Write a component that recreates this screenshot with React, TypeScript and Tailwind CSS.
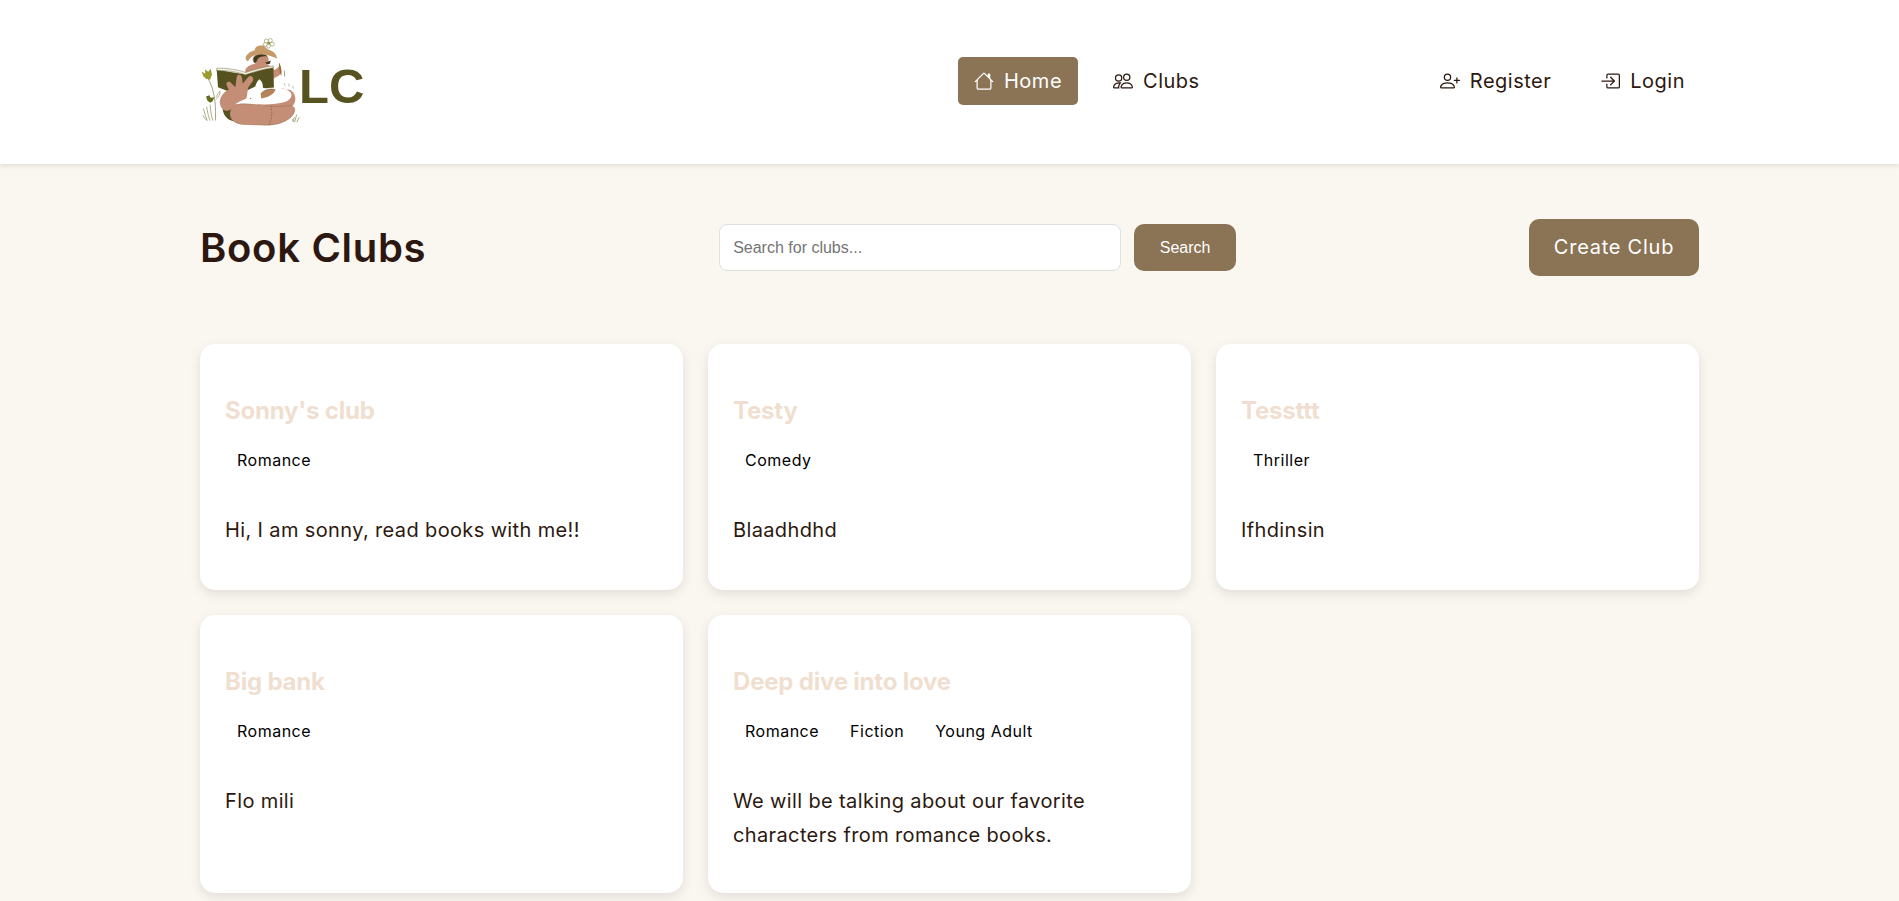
import React from 'react';
import { BsHouse, BsPeople, BsPersonPlus, BsBoxArrowInRight } from 'react-icons/bs';

interface Club {
  name: string;
  genres: string[];
  description: string;
}

const clubs: Club[] = [
  { name: "Sonny's club", genres: ['Romance'], description: 'Hi, I am sonny, read books with me!!' },
  { name: 'Testy', genres: ['Comedy'], description: 'Blaadhdhd' },
  { name: 'Tessttt', genres: ['Thriller'], description: 'Ifhdinsin' },
  { name: 'Big bank', genres: ['Romance'], description: 'Flo mili' },
  {
    name: 'Deep dive into love',
    genres: ['Romance', 'Fiction', 'Young Adult'],
    description: 'We will be talking about our favorite characters from romance books.',
  },
];

// Reader with a rabbit, drawn in the coordinates of a 3x crop of the logo
const LogoArt = () => (
  <svg viewBox="60 45 300 275" className="w-[100px] h-[92px] shrink-0 overflow-visible">
    {/* plant */}
    <path d="M106 298 C108 262 106 222 92 188 C88 178 84 172 82 168" fill="none" stroke="#77783a" strokeWidth="2" />
    <path d="M65 152 L76 158 L75 145 L85 152 L92 143 L96 160 L90 176 L78 173 L70 165 Z" fill="#9a9a2e" />
    <path d="M78 226 L88 222 L92 230 L103 228 L98 240 L90 245 L82 238 Z" fill="#666b22" />
    <path d="M108 228 C112 220 116 214 120 210 C120 220 116 228 108 234" fill="none" stroke="#77783a" strokeWidth="1.6" />
    <path d="M70 262 C74 276 78 290 82 298 M80 256 C82 272 86 288 90 298 M90 250 C92 270 94 285 98 298 M68 282 C72 288 76 294 80 298" fill="none" stroke="#77783a" strokeWidth="1.8" />
    <path d="M338 302 L344 288 M344 303 L350 280 M350 303 L358 288 M336 294 L342 302" fill="none" stroke="#77783a" strokeWidth="1.8" />
    {/* shadow behind the leg */}
    <path d="M128 262 C130 284 142 296 160 300 L170 262 Z" fill="#565220" />
    {/* torso and head */}
    <path d="M196 146 C204 130 226 126 240 128 C256 126 274 132 282 146 L284 172 L196 172 Z" fill="#c48e76" />
    <ellipse cx="242" cy="114" rx="24" ry="18" fill="#c48e76" />
    <path d="M220 112 C226 98 254 94 262 106 C252 104 240 106 234 112 L228 124 L222 124 Z" fill="#3f3a1a" />
    <path d="M256 124 L272 118 L270 128 L260 130 Z" fill="#3f3a1a" />
    {/* hat */}
    <path d="M197 108 C202 96 214 90 224 88 C224 76 238 70 252 74 C258 82 264 86 272 88 C282 92 290 100 291 112 C276 106 262 100 244 99 C226 98 210 106 204 120 C199 118 196 114 197 108 Z" fill="#c49b68" />
    {/* flower */}
    <g fill="#fff" stroke="#77783a" strokeWidth="1.5">
      <circle cx="259" cy="60" r="6" />
      <circle cx="271" cy="58" r="6" />
      <circle cx="277" cy="69" r="6" />
      <circle cx="265" cy="75" r="6" />
      <circle cx="256" cy="70" r="6" />
    </g>
    <circle cx="266" cy="66" r="4" fill="#9a9a2e" />
    {/* hand with the pen on the right */}
    <path d="M278 148 C286 146 292 142 296 136 L304 150 C302 162 292 168 278 170 Z" fill="#c48e76" />
    <path d="M297 124 C302 130 306 148 304 164 C300 160 296 142 297 124 Z" fill="#9a6a3c" />
    <path d="M313 148 L314 166" stroke="#5b4a28" strokeWidth="1.6" fill="none" />
    {/* book */}
    <path d="M110 146 L196 160 L280 138 L282 206 L226 196 L196 210 L148 212 L114 198 Z" fill="#565220" />
    <path d="M110 141 C140 140 176 146 197 154 C220 146 256 136 280 134 L280 140 C256 143 222 151 197 161 C176 153 140 147 110 148 Z" fill="#f5f1e3" stroke="#565220" strokeWidth="1.2" />
    {/* right arm round the rabbit */}
    <path d="M290 204 C316 194 344 204 346 232 C346 250 336 262 310 262 L230 250 Z" fill="#c48e76" />
    {/* leg */}
    <path d="M154 254 C190 240 240 254 280 256 C316 258 338 246 344 262 C348 286 310 313 256 312 L190 310 C166 308 148 296 150 275 Z" fill="#c48e76" stroke="#7a5a3c" strokeWidth="1" />
    <path d="M272 254 C278 272 276 296 266 312" fill="none" stroke="#5b4a28" strokeWidth="1.6" strokeDasharray="5 4" />
    {/* arm and fingers */}
    <path d="M120 248 C118 232 126 216 146 206 L140 192 C136 182 148 178 154 186 L166 198 L170 168 C172 158 184 158 186 170 L188 188 L206 166 C214 160 224 170 218 180 L204 200 L200 232 C180 240 162 248 154 262 C142 276 124 268 120 248 Z" fill="#c48e76" />
    {/* rabbit */}
    <path d="M195 237 C200 225 214 219 228 216 C222 204 226 184 238 174 C248 180 250 194 248 206 C270 196 310 196 330 212 C340 222 332 236 316 242 C290 250 250 252 222 248 C206 246 196 243 195 237 Z" fill="#fff" />
    <path d="M242 218 C252 206 272 200 286 206 C284 218 264 230 244 232 Z" fill="#b4835a" />
    <path d="M242 218 C252 206 272 200 286 206" fill="none" stroke="#5b4a28" strokeWidth="1.4" />
    <circle cx="212" cy="232" r="1.5" fill="#3f3a1a" />
    {/* tuft */}
    <path d="M300 188 C310 182 332 184 344 198 C340 208 322 208 310 202 C304 198 300 194 300 188 Z" fill="#fff" />
    <path d="M312 186 L316 194 M326 188 L328 196 M338 194 L340 202" stroke="#77783a" strokeWidth="1.4" fill="none" />
  </svg>
);

const NavLink = ({ icon, label, active = false }: { icon: React.ReactNode; label: string; active?: boolean }) => (
  <a
    className={`flex items-center gap-[10px] h-12 px-4 rounded-[5px] text-[20px] tracking-[0.5px] ${
      active ? 'bg-[#8b7355] text-white' : 'text-[#2c1810]'
    }`}
  >
    {icon}
    <span>{label}</span>
  </a>
);

const ClubCard = ({ club }: { club: Club }) => (
  <div className="bg-white rounded-[15px] px-[25px] pt-[49px] pb-[41px] shadow-[0_4px_12px_rgba(0,0,0,0.1)]">
    <h3 className="text-[24px] leading-[36px] font-bold tracking-[-0.2px] text-[#f0dfd0]">{club.name}</h3>
    <div className="flex gap-[7px] mt-[15px]">
      {club.genres.map((genre) => (
        <span key={genre} className="px-3 py-1 text-[16px] leading-[24px] tracking-[0.5px] text-black">
          {genre}
        </span>
      ))}
    </div>
    <p className="mt-[37px] min-h-[36px] text-[20px] leading-[34px] tracking-[0.37px] text-[#2c1810]">{club.description}</p>
  </div>
);

export default function App() {
  return (
    <div className="min-h-screen bg-[#faf6f0] font-['Inter',sans-serif]">
      <header className="h-[164px] bg-white shadow-[0_2px_5px_rgba(0,0,0,0.1)] flex items-center px-[200px]">
        <div className="flex items-center w-[742px] shrink-0">
          <LogoArt />
          <span className="-ml-[1px] mt-[8px] font-['Liberation_Sans',sans-serif] font-bold text-[49px] leading-none text-[#575320]">
            LC
          </span>
        </div>
        <nav className="flex items-center -mt-[2px] gap-[19px] pl-[16px]">
          <NavLink active icon={<BsHouse size={20} />} label="Home" />
          <NavLink icon={<BsPeople size={20} />} label="Clubs" />
        </nav>
        <div className="flex items-center -mt-[2px] -mr-[2px] gap-[17px] ml-auto">
          <NavLink icon={<BsPersonPlus size={20} />} label="Register" />
          <NavLink icon={<BsBoxArrowInRight size={20} />} label="Login" />
        </div>
      </header>

      <main className="px-[200px] pt-[54px] pb-2">
        <div className="flex items-center justify-between mb-[66px]">
          <h1 className="text-[40px] leading-[60px] font-semibold tracking-[0.7px] text-[#2c1810]">Book Clubs</h1>
          <form className="flex gap-[13px] -mt-[2px] font-['Liberation_Sans',sans-serif]">
            <input
              placeholder="Search for clubs..."
              className="w-[402px] h-[47px] px-[13px] pt-px bg-white border border-[#e0e0e0] rounded-[8px] text-[16px] placeholder:text-[#757575]"
            />
            <button type="button" className="w-[102px] h-[47px] pt-px rounded-[10px] bg-[#8b7355] text-white text-[16px]">
              Search
            </button>
          </form>
          <button type="button" className="w-[170px] h-[57px] -mt-[2px] rounded-[10px] bg-[#8b7355] text-white text-[20px] tracking-[0.75px]">
            Create Club
          </button>
        </div>

        <div className="grid grid-cols-3 gap-[25px]">
          {clubs.map((club) => (
            <ClubCard key={club.name} club={club} />
          ))}
        </div>
      </main>
    </div>
  );
}
